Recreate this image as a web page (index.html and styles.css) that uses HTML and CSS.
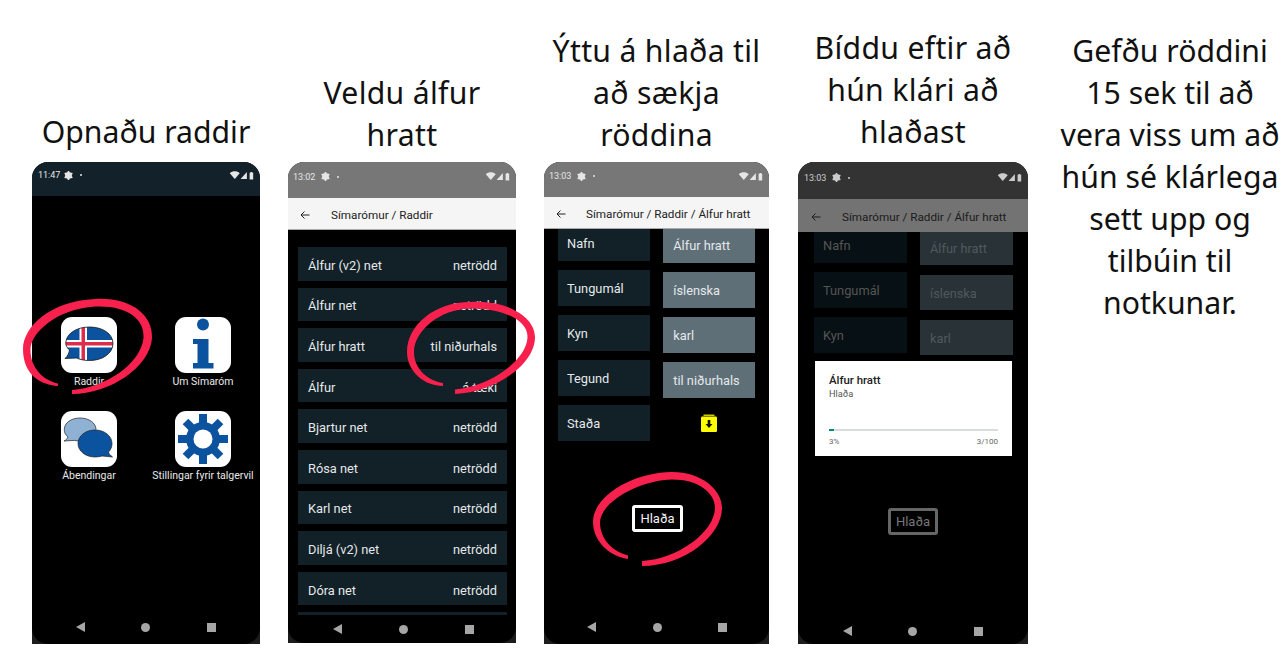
FILE: index.html
```html
<!DOCTYPE html>
<html>
<head>
<meta charset="utf-8" />
<title>Raddir</title>
<link rel="stylesheet" href="styles.css">
</head>
<body>
<svg width="0" height="0" class="defs">
  <symbol id="cog" viewBox="0 0 10 10">
    <g stroke="currentColor" stroke-width="1.8">
      <line x1="5" y1="0" x2="5" y2="10"/><line x1="0.700" y1="2.500" x2="9.300" y2="7.500"/><line x1="9.300" y1="2.500" x2="0.700" y2="7.500"/>
    </g>
    <circle cx="5" cy="5" r="2.800" fill="none" stroke="currentColor" stroke-width="2"/>
  </symbol>
  <symbol id="signals" viewBox="0 0 26 10">
    <path d="M0 2.5C3-.3 8-.3 11 2.5L5.5 9Z" fill="currentColor"/>
    <path d="M19 1V9H12Z" fill="currentColor"/>
    <path d="M22 2H23V1H25V2H26V9.500H22Z" fill="currentColor"/>
  </symbol>
  <symbol id="back" viewBox="0 0 10 10">
    <path d="M9.500 5H1M4.500 1.500L1 5L4.500 8.500" fill="none" stroke="currentColor" stroke-width="1"/>
  </symbol>
</svg>

<div class="board">

  <section class="step">
    <h2 class="cap cap-low">Opnaðu raddir</h2>
    <div class="phone p1">
      <div class="status"><span class="time">11:47</span><svg class="cog"><use href="#cog"/></svg><i class="dot"></i><svg class="sig"><use href="#signals"/></svg></div>
      <div class="screen home">
        <div class="app">
          <div class="tile">
            <svg viewBox="0 0 56 56">
              <clipPath id="bub"><path d="M8.500 33C5 30 4.800 27 4.800 26.500C4.800 17 15 10 28.500 10C42 10 52 17 52 26.500C52 36 42 43.500 28.500 43.500C23 43.500 19 42.500 15.500 41L4 41.500C6.500 39.500 8 36 8.500 33Z"/></clipPath>
              <g clip-path="url(#bub)">
                <rect width="56" height="56" fill="#0b539f"/>
                <rect x="18.500" width="7.500" height="56" fill="#fff"/>
                <rect y="23" width="56" height="7.500" fill="#fff"/>
                <rect x="20.500" width="3.500" height="56" fill="#dd2c4c"/>
                <rect y="25" width="56" height="3.500" fill="#dd2c4c"/>
              </g>
              <path d="M8.500 33C5 30 4.800 27 4.800 26.500C4.800 17 15 10 28.500 10C42 10 52 17 52 26.500C52 36 42 43.500 28.500 43.500C23 43.500 19 42.500 15.500 41L4 41.500C6.500 39.500 8 36 8.500 33Z" fill="none" stroke="#1a1a1a" stroke-width="0.8"/>
            </svg>
          </div>
          <span class="app-name">Raddir</span>
        </div>
        <div class="app">
          <div class="tile">
            <svg viewBox="0 0 56 56">
              <circle cx="28" cy="7.500" r="6" fill="#0b539f"/>
              <path d="M18 22H33.500V46H38.500V51.500H18V46H22.500V27H18Z" fill="#0b539f"/>
            </svg>
          </div>
          <span class="app-name">Um Símaróm</span>
        </div>
        <div class="app">
          <div class="tile">
            <svg viewBox="0 0 56 56">
              <path d="M7 26C4 23.500 3.300 21 3.300 18.500C3.300 12 10 7 19 7C28 7 35 12 35 18.500C35 25 28 30 19 30C17 30 15 29.800 13.500 29.400L3 30C5 29 6.500 27.500 7 26Z" fill="#8eb1d4" stroke="#222" stroke-width="0.7"/>
              <path d="M47.500 41C50 38.500 51 35.500 51 32.500C51 25 43.500 19 34 19C24.500 19 17 25 17 32.500C17 40 24.500 46 34 46C36.500 46 39 45.600 41 45L51.500 46C49.500 44.500 48 43 47.500 41Z" fill="#0b539f" stroke="#222" stroke-width="0.7"/>
            </svg>
          </div>
          <span class="app-name">Ábendingar</span>
        </div>
        <div class="app">
          <div class="tile">
            <svg viewBox="0 0 56 56">
              <g stroke="#0b539f" stroke-width="8">
                <line x1="28" y1="3" x2="28" y2="53"/><line x1="3" y1="28" x2="53" y2="28"/>
                <line x1="10.500" y1="10.500" x2="45.500" y2="45.500"/><line x1="45.500" y1="10.500" x2="10.500" y2="45.500"/>
              </g>
              <circle cx="28" cy="28" r="17" fill="#0b539f"/>
              <circle cx="28" cy="28" r="9.500" fill="#fff"/>
            </svg>
          </div>
          <span class="app-name">Stillingar fyrir talgervil</span>
        </div>
      </div>
      <div class="nav"><i class="tri"></i><i class="circ"></i><i class="sq"></i></div>
    </div>
  </section>

  <section class="step">
    <h2 class="cap cap-wide">Veldu álfur<br>hratt</h2>
    <div class="phone p2">
      <div class="status"><span class="time">13:02</span><svg class="cog"><use href="#cog"/></svg><i class="dot"></i><svg class="sig"><use href="#signals"/></svg></div>
      <div class="appbar"><svg class="back"><use href="#back"/></svg><span>Símarómur / Raddir</span></div>
      <div class="screen list">
        <div class="row"><span>Álfur (v2) net</span><span>netrödd</span></div>
        <div class="row"><span>Álfur net</span><span>netrödd</span></div>
        <div class="row"><span>Álfur hratt</span><span>til niðurhals</span></div>
        <div class="row"><span>Álfur</span><span>á tæki</span></div>
        <div class="row"><span>Bjartur net</span><span>netrödd</span></div>
        <div class="row"><span>Rósa net</span><span>netrödd</span></div>
        <div class="row"><span>Karl net</span><span>netrödd</span></div>
        <div class="row"><span>Diljá (v2) net</span><span>netrödd</span></div>
        <div class="row"><span>Dóra net</span><span>netrödd</span></div>
        <div class="row"></div>
      </div>
      <div class="nav"><i class="tri"></i><i class="circ"></i><i class="sq"></i></div>
    </div>
  </section>

  <section class="step step-wide">
    <h2 class="cap cap-wide">Ýttu á hlaða til<br>að sækja<br>röddina</h2>
    <div class="phone p3">
      <div class="status"><span class="time">13:03</span><svg class="cog"><use href="#cog"/></svg><i class="dot"></i><svg class="sig"><use href="#signals"/></svg></div>
      <div class="appbar"><svg class="back"><use href="#back"/></svg><span>Símarómur / Raddir / Álfur hratt</span></div>
      <div class="screen detail">
        <div class="cells">
          <div class="col">
            <div class="cell">Nafn</div>
            <div class="cell">Tungumál</div>
            <div class="cell">Kyn</div>
            <div class="cell">Tegund</div>
            <div class="cell">Staða</div>
          </div>
          <div class="col col-val">
            <div class="cell val">Álfur hratt</div>
            <div class="cell val">íslenska</div>
            <div class="cell val">karl</div>
            <div class="cell val">til niðurhals</div>
            <div class="cell-icon">
              <svg class="dl" viewBox="0 0 16 18">
                <path d="M2.500 1.200H13.500" stroke="#ffff00" stroke-width="1.200"/>
                <rect y="2.500" width="16" height="15.500" rx="1.200" fill="#ffff00"/>
                <path d="M6.700 6H9.300V10H11.500L8 14L4.500 10H6.700Z" fill="#111"/>
              </svg>
            </div>
          </div>
        </div>
        <div class="load">Hlaða</div>
      </div>
      <div class="nav"><i class="tri"></i><i class="circ"></i><i class="sq"></i></div>
    </div>
  </section>

  <section class="step">
    <h2 class="cap cap-low cap-wide">Bíddu eftir að<br>hún klári að<br>hlaðast</h2>
    <div class="phone p4">
      <div class="status"><span class="time">13:03</span><svg class="cog"><use href="#cog"/></svg><i class="dot"></i><svg class="sig"><use href="#signals"/></svg></div>
      <div class="appbar"><svg class="back"><use href="#back"/></svg><span>Símarómur / Raddir / Álfur hratt</span></div>
      <div class="screen detail">
        <div class="cells">
          <div class="col">
            <div class="cell">Nafn</div>
            <div class="cell">Tungumál</div>
            <div class="cell">Kyn</div>
          </div>
          <div class="col col-val">
            <div class="cell val">Álfur hratt</div>
            <div class="cell val">íslenska</div>
            <div class="cell val">karl</div>
          </div>
        </div>
        <div class="load">Hlaða</div>
      </div>
      <div class="nav"><i class="tri"></i><i class="circ"></i><i class="sq"></i></div>
      <div class="dialog">
        <div class="dlg-title">Álfur hratt</div>
        <div class="dlg-sub">Hlaða</div>
        <div class="bar"><div class="bar-fill"></div></div>
        <div class="dlg-nums"><span>3%</span><span>3/100</span></div>
      </div>
    </div>
  </section>

  <section class="note">
    Gefðu röddini<br>15 sek til að<br>vera viss um að<br>hún sé klárlega<br>sett upp og<br>tilbúin til<br>notkunar.
  </section>

  <!-- red rings drawn over the screenshots -->
  <svg class="rings" viewBox="0 0 1288 669">
    <path d="M58 386C42 385 23 376 23 349C23 327 50 301 95 299C131 297 153 315 152 338C150 367 110 394 72 394L72 390C106 388 141 363 143.500 338C145 319 127 305 95 306.500C56 309 31 333 30.500 349C30 369 45 381 58 383.500Z"/>
    <path d="M443 386C425 386 407 372 407 352C407 325 435 302 470 302C510 300 535 318 535 337C535 365 495 392 455 394L455 389.500C488 387 527 361 527.500 337C528 321 504 308 470 308.500C440 309 414 331 414 352C414 369 428 381 443 383Z"/>
    <path d="M628 559C608 556 593 540 593 522C593 495 635 472 672 472C702 472 722 490 722 508C722 535 685 566 642 566L642 561C678 559 714.500 532 715 508C715 493 699 479.500 672 479.500C641 480 601 501 600 522C600 539 612 551 628 555.500Z"/>
  </svg>
</div>
</body>
</html>
```

FILE: styles.css
```css
* {
  box-sizing: border-box;
}
body {
  margin: 0;
  background: #fff;
  font-family: Roboto, sans-serif;
}
.defs {
  position: absolute;
}
.board {
  position: relative;
  display: flex;
  width: 1288px;
  height: 669px;
  padding-left: 32px;
  overflow: hidden;
}
.step {
  margin-right: 28px;
}
.step-wide {
  margin-right: 29px;
}
.cap {
  display: flex;
  align-items: flex-end;
  justify-content: center;
  height: 162px;
  margin: 0;
  padding-bottom: 6px;
  font: 400 30.200px/42px "Noto Sans", sans-serif;
  color: #111;
  text-align: center;
  white-space: nowrap;
}
.cap-low {
  padding-bottom: 9px;
}
.cap-wide {
  letter-spacing: 0.300px;
}
.note {
  width: 228px;
  padding-top: 30px;
  font: 400 30.200px/42px "Noto Sans", sans-serif;
  color: #111;
  text-align: center;
  white-space: nowrap;
}
.rings {
  position: absolute;
  left: 0;
  top: 0;
  width: 1288px;
  height: 669px;
  fill: #f8214e;
}

/* phones */
.phone {
  position: relative;
  display: flex;
  flex-direction: column;
  width: 228px;
  height: 482px;
  background: #1c1c1c;
  border-radius: 16px 16px 0 0;
  overflow: hidden;
  color: #e4e8ea;
}
.status {
  display: flex;
  align-items: center;
  flex: none;
  height: 36px;
  padding: 0 6px 7px 5px;
  background: #777;
  color: #e6e6e6;
  font-size: 9px;
}
.time {
  width: 28px;
}
.cog {
  width: 9px;
  height: 9px;
}
.dot {
  width: 2px;
  height: 2px;
  margin-left: 7px;
  border-radius: 50%;
  background: currentColor;
}
.sig {
  width: 25px;
  height: 9px;
  margin-left: auto;
}
.appbar {
  display: flex;
  align-items: center;
  flex: none;
  height: 32px;
  padding: 2px 0 0 12px;
  background: #f5f5f5;
  border-bottom: 1px solid #aaa;
  color: #222;
  font-size: 11.700px;
}
.back {
  width: 10px;
  height: 10px;
  margin-right: 21px;
}
.screen {
  flex: 1;
  min-height: 0;
  background: #000;
  overflow: hidden;
}
.nav {
  display: grid;
  grid-template-columns: repeat(3, 65.500px);
  justify-items: center;
  align-items: center;
  flex: none;
  height: 34px;
  padding-left: 15.500px;
  background: #000;
  border-radius: 0 0 16px 16px;
}
.tri {
  width: 0;
  height: 0;
  border-top: 5px solid transparent;
  border-bottom: 5px solid transparent;
  border-right: 9px solid #a6a6a6;
}
.circ {
  width: 9px;
  height: 9px;
  border-radius: 50%;
  background: #a6a6a6;
}
.sq {
  width: 9px;
  height: 9px;
  background: #a6a6a6;
}

/* home screen */
.p1 .status {
  height: 34px;
  padding: 0 6px 8px 6px;
  background: #12212a;
}
.p1 .time {
  width: 26px;
}
.home {
  display: grid;
  grid-template-columns: 114px 114px;
  grid-auto-rows: 94px;
  padding-top: 121px;
}
.app {
  display: flex;
  flex-direction: column;
  align-items: center;
}
.tile {
  width: 56px;
  height: 56px;
  background: #fff;
  border-radius: 11px;
}
.tile svg {
  display: block;
  width: 56px;
  height: 56px;
}
.app-name {
  margin-top: 2px;
  font-size: 10.500px;
  line-height: 13px;
  white-space: nowrap;
  color: #e8e8e8;
}

/* voice list */
.p2 {
  height: 481px;
}
.list {
  padding: 17px 9px 0 10px;
}
.row {
  display: flex;
  align-items: center;
  justify-content: space-between;
  height: 33.600px;
  margin-bottom: 7px;
  padding: 3px 10px 0;
  background: #122027;
  font-size: 12.800px;
}
.p2 .nav {
  grid-template-columns: repeat(3, 66px);
  height: 28px;
  padding-left: 16px;
}

/* voice detail */
.p3 {
  width: 225px;
}
.p3 .status {
  height: 35px;
}
.p3 .back {
  margin-right: 20px;
}
.p3 .nav {
  padding-left: 15px;
}
.detail {
  padding: 0 14px;
}
.cells {
  display: flex;
  gap: 13.500px;
  margin-top: -4px;
}
.col {
  width: 92.500px;
}
.col-val {
  padding-top: 2px;
}
.cell {
  display: flex;
  align-items: center;
  height: 35.500px;
  margin-bottom: 9.500px;
  padding: 1.500px 0 0 9px;
  background: #122027;
  font-size: 12.800px;
}
.val {
  padding-left: 10px;
  background: #5f6f78;
}
.cell-icon {
  display: flex;
  justify-content: center;
  padding-top: 7px;
}
.dl {
  width: 16px;
  height: 18px;
}
.load {
  width: 51px;
  height: 27px;
  margin: 55px 0 0 74px;
  border: 3px solid #fff;
  border-radius: 3px;
  font-size: 13px;
  line-height: 21px;
  text-align: center;
  color: #f2f2f2;
}

/* download dialog on top of dimmed screen */
.p4 {
  width: 230px;
  color: #555;
}
.p4 .status {
  height: 37px;
  padding: 0 6px 6px 6px;
  background: #333;
  color: #ccc;
}
.p4 .appbar {
  height: 33px;
  padding-left: 13px;
  background: #737373;
  border-bottom: 0;
  color: #1c1c1c;
}
.p4 .detail {
  padding-left: 16px;
}
.p4 .cells {
  margin-top: -5px;
}
.p4 .cell {
  padding-top: 2px;
  background: #071014;
  color: #555;
}
.p4 .val {
  background: #283237;
  color: #50595d;
}
.p4 .col-val {
  padding-top: 2.500px;
}
.p4 .load {
  margin-top: 143px;
  margin-left: 74px;
  width: 50px;
  border-color: #666;
  color: #777;
}
.p4 .nav {
  height: 26px;
  padding-left: 16.500px;
}
.dialog {
  position: absolute;
  left: 17px;
  top: 199px;
  width: 197px;
  height: 95px;
  padding: 13px 14px 0;
  background: #fff;
  color: #222;
}
.dlg-title {
  font-size: 11.400px;
  font-weight: 500;
  line-height: 13px;
}
.dlg-sub {
  margin-top: 1px;
  font-size: 9.200px;
  line-height: 11px;
  color: #555;
}
.bar {
  height: 2px;
  margin-top: 30px;
  background: #d8dcdc;
}
.bar-fill {
  width: 3%;
  height: 2px;
  background: #00897b;
}
.dlg-nums {
  display: flex;
  justify-content: space-between;
  margin-top: 6px;
  font-size: 8px;
  color: #666;
}
```
